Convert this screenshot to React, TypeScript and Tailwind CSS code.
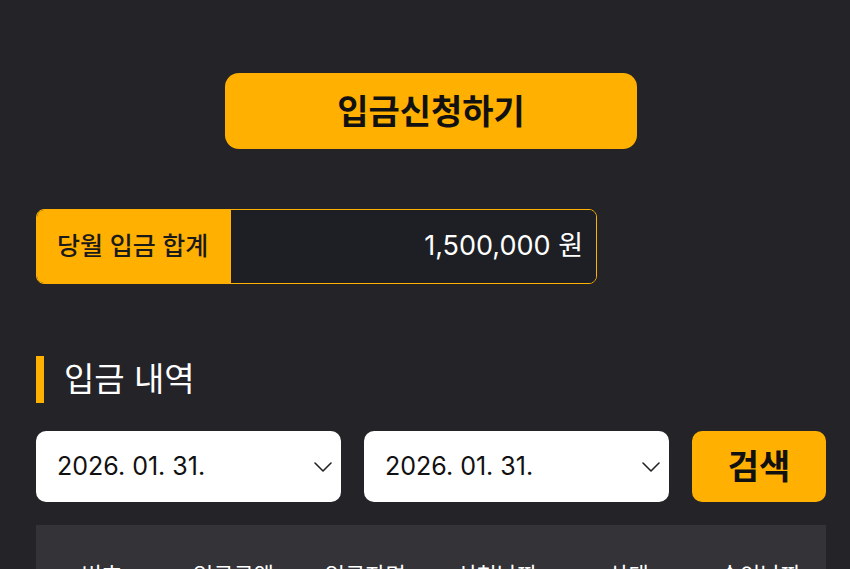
import React from "react";

const Chevron = () => (
  <svg width="20" height="12" viewBox="0 0 20 12" fill="none" stroke="#222" strokeWidth="1.6" strokeLinecap="round" strokeLinejoin="round">
    <path d="M2 2 L10 10 L18 2" />
  </svg>
);

export default function App() {
  const cols = ["번호", "입금금액", "입금자명", "신청날짜", "상태", "승인날짜"];
  return (
    <div
      className="w-[850px] h-[569px] overflow-hidden bg-[#232328] text-white"
      style={{ fontFamily: 'Inter, "Noto Sans CJK KR", "Noto Sans", sans-serif' }}
    >
      <div className="ml-[36px] w-[790px] pt-[73px] flex flex-col">
        <div className="flex justify-center">
          <button className="w-[412px] h-[76px] rounded-[14px] bg-[#ffb000] text-[#111] text-[34px] font-semibold flex items-center justify-center">
            입금신청하기
          </button>
        </div>

        <div className="mt-[60px] w-[561px] h-[75px] rounded-[8px] border-[1.5px] border-[#ffb000] flex overflow-hidden">
          <div className="w-[194px] bg-[#ffb000] text-[#1a1a1a] text-[25px] font-medium flex items-center pl-[20px] whitespace-nowrap">
            당월 입금 합계
          </div>
          <div className="flex-1 bg-[#1e1f24] flex items-center justify-end pr-[13px] text-[27px] whitespace-nowrap">
            1,500,000 원
          </div>
        </div>

        <div className="mt-[72px] flex items-center h-[47px]">
          <div className="w-[8px] h-[47px] bg-[#ffb000]" />
          <div className="ml-[20px] text-[33px] leading-none">입금 내역</div>
        </div>

        <div className="mt-[28px] flex gap-[23px] h-[71px]">
          <div className="w-[305px] bg-white rounded-[10px] flex items-center justify-between pl-[21px] pr-[8px] text-[#111] text-[25px]">
            <span>2026. 01. 31.</span>
            <Chevron />
          </div>
          <div className="w-[305px] bg-white rounded-[10px] flex items-center justify-between pl-[21px] pr-[8px] text-[#111] text-[25px]">
            <span>2026. 01. 31.</span>
            <Chevron />
          </div>
          <button className="flex-1 bg-[#ffb000] rounded-[10px] text-[#111] text-[34px] font-bold flex items-center justify-center">
            검색
          </button>
        </div>

        <div className="mt-[23px] bg-[#333338] grid grid-cols-6 pt-[34px] pb-[30px] text-[22px]">
          {cols.map((c) => (
            <div key={c} className="text-center">
              {c}
            </div>
          ))}
        </div>
      </div>
    </div>
  );
}
